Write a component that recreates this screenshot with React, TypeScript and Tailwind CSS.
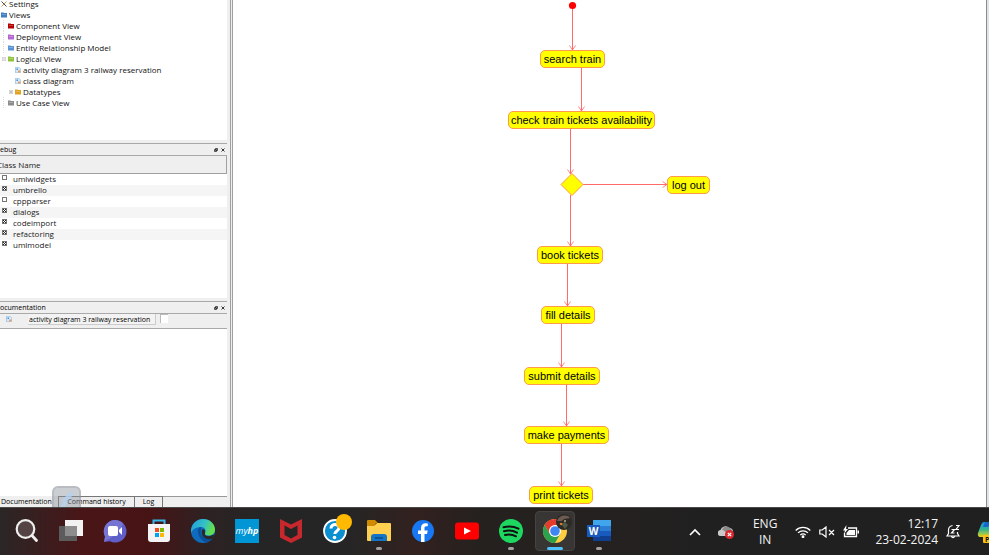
import type { ReactNode } from "react";

type TreeItem = {
  level: 0 | 1 | 2;
  label: string;
  icon: "tools" | "folder" | "diagram";
  color?: string;
  expander?: string;
};

const treeItems: TreeItem[] = [
  { level: 0, label: "Settings", icon: "tools" },
  { level: 0, label: "Views", icon: "folder", color: "#3f7fc4" },
  { level: 1, label: "Component View", icon: "folder", color: "#b30000" },
  { level: 1, label: "Deployment View", icon: "folder", color: "#b566cf" },
  { level: 1, label: "Entity Relationship Model", icon: "folder", color: "#5b93d6" },
  { level: 1, label: "Logical View", icon: "folder", color: "#8fc43c", expander: "−" },
  { level: 2, label: "activity diagram 3 railway reservation", icon: "diagram" },
  { level: 2, label: "class diagram", icon: "diagram" },
  { level: 2, label: "Datatypes", icon: "folder", color: "#e0a020", expander: "+" },
  { level: 1, label: "Use Case View", icon: "folder", color: "#8c8c8c" },
];

const slotWidth = { 0: "w-px", 1: "w-2", 2: "w-[15px]" };

const classes = [
  { name: "umlwidgets", on: false },
  { name: "umbrello", on: true },
  { name: "cppparser", on: false },
  { name: "dialogs", on: true },
  { name: "codeimport", on: true },
  { name: "refactoring", on: true },
  { name: "umlmodel", on: true },
];

const nodes = [
  { label: "search train", box: "left-[307px] top-[50px] w-[65px]" },
  { label: "check train tickets availability", box: "left-[275px] top-[111px] w-[147px]" },
  { label: "log out", box: "left-[434px] top-[176px] w-[43px]" },
  { label: "book tickets", box: "left-[304px] top-[246px] w-[66px]" },
  { label: "fill details", box: "left-[308px] top-[306px] w-[54px]" },
  { label: "submit details", box: "left-[291px] top-[367px] w-[76px]" },
  { label: "make payments", box: "left-[291px] top-[426px] w-[85px]" },
  { label: "print tickets", box: "left-[296px] top-[486px] w-[64px]" },
];

const arrows = [
  { x: 339.5, from: 8, to: 50 },
  { x: 348.5, from: 68, to: 111 },
  { x: 337.5, from: 129, to: 174 },
  { x: 337.5, from: 195, to: 246 },
  { x: 334.5, from: 264, to: 306 },
  { x: 328.5, from: 324, to: 367 },
  { x: 333.5, from: 385, to: 426 },
  { x: 328.5, from: 444, to: 486 },
];

function FolderIcon({ color }: { color?: string }) {
  return (
    <svg viewBox="0 0 12 12" className="size-[6px] shrink-0">
      <path d="M0 1h5l1 1h6v9H0z" fill={color} />
      <path d="M2 5h8" stroke="#fff" strokeOpacity=".25" strokeWidth="2" />
    </svg>
  );
}

function DiagramIcon() {
  return (
    <svg viewBox="0 0 12 12" className="size-[6px] shrink-0">
      <path d="M1 .5h7l3.500 3.500v7.500H1z" fill="#d9ebfa" stroke="#6aa5d8" />
      <path d="M3 3h3v3H3z" fill="#3f8fd6" />
      <path d="M6 7h5v4H6z" fill="#e0a070" />
    </svg>
  );
}

function ToolsIcon() {
  return (
    <svg viewBox="0 0 12 12" className="size-[6px] shrink-0">
      <path d="M1 1l10 10" stroke="#4a4a4a" strokeWidth="2" />
      <path d="M11 1L1 11" stroke="#c9a050" strokeWidth="2" />
    </svg>
  );
}

function PanelTitle({ children }: { children: ReactNode }) {
  return (
    <div className="flex h-[13px] shrink-0 items-center justify-between border-y border-[#a9a9a9] bg-[#efefef] pr-[2px] text-[7px] leading-[11px] text-black">
      <span>{children}</span>
      <span className="flex items-center gap-[3px]">
        <button type="button" aria-label="Float panel" className="size-1">
          <svg viewBox="0 0 8 8" className="size-1">
            <path d="M3 1h4v4H3zM1 3h4v4H1z" fill="none" stroke="#222" strokeWidth="1.500" />
          </svg>
        </button>
        <button type="button" aria-label="Close panel" className="size-1">
          <svg viewBox="0 0 8 8" className="size-1">
            <path d="M1 1l6 6M7 1L1 7" stroke="#222" strokeWidth="1.800" />
          </svg>
        </button>
      </span>
    </div>
  );
}

function Sidebar() {
  return (
    <aside className="relative flex w-[227px] shrink-0 flex-col overflow-hidden bg-[#efefef]">
      <div className="h-[140px] shrink-0 overflow-hidden bg-white">
        <ul className="-mt-[2px]">
          {treeItems.map((item) => (
            <li key={item.label} className="flex h-[11px] items-center whitespace-nowrap text-[8px] leading-[11px] text-[#111]">
              <span className={`${slotWidth[item.level]} flex h-full shrink-0 items-center justify-end`}>
                {item.level === 1 && !item.expander && <span className="mr-1 h-full border-l border-dotted border-[#ddd]" />}
                {item.expander && (
                  <svg viewBox="0 0 8 8" className="mr-[2px] size-1 shrink-0">
                    <path d="M.5.500h7v7h-7zM2 4h4" fill="none" stroke="#999" />
                    {item.expander === "+" && <path d="M4 2v4" stroke="#555" />}
                  </svg>
                )}
              </span>
              {item.icon === "folder" && <FolderIcon color={item.color} />}
              {item.icon === "diagram" && <DiagramIcon />}
              {item.icon === "tools" && <ToolsIcon />}
              <span className="ml-[2px]">{item.label}</span>
            </li>
          ))}
        </ul>
      </div>

      <div className="h-[3px] shrink-0" />
      <PanelTitle>ebug</PanelTitle>
      <div className="h-[142px] shrink-0 bg-white">
        <table className="w-full border-collapse text-[8px] text-[#1a1a1a]">
          <thead>
            <tr>
              <th colSpan={2} className="h-[17px] border-r border-b border-[#a0a0a0] bg-[#efefef] p-0 pt-px text-left leading-4 font-normal">
                <span className="-ml-[3px]">Class Name</span>
              </th>
            </tr>
          </thead>
          <tbody>
            {classes.map((c) => (
              <tr key={c.name} className="even:bg-[#f5f5f5]">
                <td className="w-[13px] p-0 pt-px pl-[2px] align-top">
                  <span className="relative block size-[5px]">
                    <input
                      id={c.name}
                      type="checkbox"
                      defaultChecked={c.on}
                      className="peer block size-[5px] appearance-none border border-[#777] bg-white"
                    />
                    <svg viewBox="0 0 10 10" className="pointer-events-none absolute inset-0 hidden size-[5px] peer-checked:block">
                      <path d="M2 2l6 6M8 2L2 8" stroke="#222" strokeWidth="2" />
                    </svg>
                  </span>
                </td>
                <td className="h-[11px] p-0 leading-[10px]">
                  <label htmlFor={c.name} className="block h-[11px]">{c.name}</label>
                </td>
              </tr>
            ))}
          </tbody>
        </table>
      </div>

      <div className="h-[3px] shrink-0" />
      <PanelTitle>ocumentation</PanelTitle>
      <div className="flex h-[15px] shrink-0 items-start border-b border-[#a9a9a9] pl-[6px]">
        <span className="mt-[2px] flex w-[22px]">
          <DiagramIcon />
        </span>
        <input
          aria-label="Documented item"
          readOnly
          value="activity diagram 3 railway reservation"
          className="h-[11px] w-32 border-r border-b border-[#ccc] bg-[#f3f3f3] pl-px text-[7px] leading-[10px] text-black outline-none"
        />
        <input
          type="checkbox"
          aria-label="Modified"
          className="ml-1 h-[9px] w-2 appearance-none border-t border-l border-[#bbb] bg-white"
        />
      </div>
      <textarea aria-label="Documentation text" className="min-h-0 flex-1 resize-none bg-white outline-none" />
      <div className="flex h-[11px] shrink-0 text-[7px] leading-[11px] text-black">
        <button type="button" className="w-[59px] border-r border-[#777] pl-px text-left">Documentation</button>
        <button type="button" className="w-[76px] border-t border-r border-[#777] leading-[10px]">Command history</button>
        <button type="button" className="w-7 border-t border-r border-[#777] leading-[10px]">Log</button>
        <span className="flex-1 border-t border-[#999]" />
      </div>
      <div className="pointer-events-none absolute bottom-0 left-[52px] h-[21px] w-[29px] rounded-t-md border-2 border-b-0 border-[#8f949c]/30 bg-[#8b929e]/45">
        <svg viewBox="0 0 25 19" className="h-full w-full">
          <path d="M8 12L16 4l4 1-4 6-7 3zM6 19l3-5 5-1-3 6z" fill="#b4d2f2" fillOpacity=".8" />
        </svg>
      </div>
    </aside>
  );
}

function Canvas() {
  return (
    <main className="relative min-w-0 flex-1 overflow-hidden bg-white">
      <svg className="absolute inset-0 h-full w-full" fill="none" stroke="#ff6a6a" strokeWidth="1">
        {arrows.map((a) => (
          <g key={a.from}>
            <path d={`M${a.x} ${a.from}V${a.to}`} />
            <path d={`M${a.x - 3} ${a.to - 4.5}L${a.x} ${a.to}L${a.x + 3} ${a.to - 4.5}`} strokeOpacity=".8" />
          </g>
        ))}
        <path d="M350 184.500H434" />
        <path d="M429.500 181.500L434 184.500L429.500 187.500" strokeOpacity=".8" />
        <circle cx="339.500" cy="5.500" r="3.600" fill="#f00" stroke="none" />
        <path d="M339 173.500L350 184.500L339 195.500L328 184.500Z" fill="#ff0" stroke="#ff9a3c" />
      </svg>
      {nodes.map((n) => (
        <div
          key={n.label}
          className={`absolute flex h-[18px] items-center justify-center rounded-[5px] border border-[#ff9a4a] bg-[#ffff00] font-['Liberation_Sans',Arial,sans-serif] text-[11px] leading-4 whitespace-nowrap text-black ${n.box}`}
        >
          {n.label}
        </div>
      ))}
    </main>
  );
}

const apps: { name: string; state?: "open" | "active"; art: ReactNode }[] = [
  {
    name: "Search",
    art: (
      <>
        <circle cx="10.500" cy="10" r="8.800" fill="#6b5a5c" fillOpacity=".6" stroke="#eee" strokeWidth="2.200" />
        <path d="M17 16.500L21.500 21.500" stroke="#eee" strokeWidth="2.800" strokeLinecap="round" />
      </>
    ),
  },
  {
    name: "Task View",
    art: (
      <>
        <path d="M6 1h18v16H6z" fill="#f2f2f2" />
        <path d="M0 7h18v15H0z" fill="#5c5c5c" />
        <path d="M6 7h12v10H6z" fill="#8d8d8d" />
      </>
    ),
  },
  {
    name: "Chat",
    art: (
      <>
        <path d="M12 1a11.300 11.300 0 1 1-5 21.300L1 23l1-5.500A11.300 11.300 0 0 1 12 1z" fill="#5f5fc9" />
        <path d="M12 1A11.300 11.300 0 0 0 2 17.500L1 23Q16 15 20 4.500A11 11 0 0 0 12 1z" fill="#8583dc" fillOpacity=".6" />
        <rect x="5" y="7" width="10" height="10" rx="2" fill="#fff" />
        <path d="M16 11l3-3v8l-3-3z" fill="#fff" />
      </>
    ),
  },
  {
    name: "Microsoft Store",
    art: (
      <>
        <path d="M6.500 6V1.500h11V6" fill="none" stroke="#35b7ea" strokeWidth="2" />
        <path d="M1 5h22v15q0 3-3 3H4q-3 0-3-3z" fill="#f4f4f4" />
        <path d="M8 9h4v4H8z" fill="#f25022" />
        <path d="M13 9h4v4h-4z" fill="#7fba00" />
        <path d="M8 14h4v4H8z" fill="#00a4ef" />
        <path d="M13 14h4v4h-4z" fill="#ffb900" />
      </>
    ),
  },
  {
    name: "Edge",
    art: (
      <>
        <defs>
          <linearGradient id="edgeTop" x1="0" y1="0" x2="1" y2=".3">
            <stop offset="0" stopColor="#1e9be0" />
            <stop offset=".6" stopColor="#35c1c5" />
            <stop offset="1" stopColor="#63df4f" />
          </linearGradient>
        </defs>
        <circle cx="12" cy="12" r="12" fill="#0f6cbd" />
        <path d="M0 11C1 4 6 0 12 0c7 0 12 5 12 10.500 0 4-3 6-6.500 6-3 0-4-1-3.500-2.500 1.500-3-.5-6-4-6-4.500 0-8.500 2-10 6z" fill="url(#edgeTop)" />
        <path d="M10 8C5 8 6 20 15 23.500c3-.6 5.500-2.500 7-5C15 21 8 17 10 11z" fill="#0b4f9c" />
        <path d="M14 14c-1.500 3 4 4.500 8.500 1.500l1.500 3-3 1.500C14 21 9.500 17 11 11c1-2 4 0 3 3z" fill="#292727" />
      </>
    ),
  },
  {
    name: "myHP",
    art: (
      <>
        <path d="M0 0h24v24H0z" fill="#0096d6" />
        <text x="12" y="15" textAnchor="middle" fill="#fff" fontSize="9" fontStyle="italic" fontFamily="Open Sans">
          my<tspan fontWeight="700">hp</tspan>
        </text>
      </>
    ),
  },
  {
    name: "McAfee",
    art: <path d="M1 0l11 5.500L23 0v18.500L12 24 1 18.500zM5.500 6.500v9.500l6.500 3.500 6.500-3.500V6.500L12 10z" fill="#c6282e" fillRule="evenodd" />,
  },
  {
    name: "HP Support Assistant",
    art: (
      <>
        <circle cx="12" cy="12" r="11" fill="#0a8fd0" stroke="#fff" strokeWidth="1.800" />
        <path d="M8 9.500C8 4 16.500 4.500 16 9c-.3 3-4 3-4.200 6" fill="none" stroke="#fff" strokeWidth="3" />
        <circle cx="11.500" cy="18.500" r="1.800" fill="#fff" />
        <circle cx="21" cy="3" r="8" fill="#ffb900" />
      </>
    ),
  },
  {
    name: "File Explorer",
    state: "open",
    art: (
      <>
        <path d="M0 2q0-1 1-1h7l3 3h-2L7 8H0z" fill="#d18b00" />
        <path d="M0 7h7l3-3h13q1 0 1 1v16q0 1-1 1H1q-1 0-1-1z" fill="#ffd04f" />
        <path d="M4 22v-4q0-3 3-3h10q3 0 3 3v4z" fill="#1275c6" />
        <path d="M8 18h8v2H8z" fill="#0a5395" />
      </>
    ),
  },
  {
    name: "Facebook",
    art: (
      <>
        <circle cx="12" cy="12" r="11" fill="#1877f2" />
        <path d="M10 23v-8H7v-3.500h3V9c0-3.200 2-4.700 4.500-4.700l2.300.2v2.800h-1.500c-1.300 0-1.800.8-1.800 1.700v2.500h3.200L16 15h-2.500v8z" fill="#fff" />
      </>
    ),
  },
  {
    name: "YouTube",
    art: (
      <>
        <rect x="0" y="3.500" width="24" height="17" rx="3" fill="#f00" />
        <path d="M9 8.500l7 3.500-7 3.500z" fill="#fff" />
      </>
    ),
  },
  {
    name: "Spotify",
    state: "open",
    art: (
      <>
        <circle cx="12" cy="12" r="12" fill="#1ed760" />
        <path d="M4.500 8.200q8-2.200 15 1.500M5 12.200q7-2 13 1.500M6 16q6-1.500 11 1.300" fill="none" stroke="#111" strokeWidth="2" strokeLinecap="round" />
      </>
    ),
  },
  {
    name: "Chrome",
    state: "active",
    art: (
      <>
        <circle cx="12" cy="12" r="12" fill="#ffcd40" />
        <path d="M1.600 6A12 12 0 0 1 22.400 6H12l-5.200 9z" fill="#e33b2e" />
        <path d="M1.600 6A12 12 0 0 0 12 24l5.200-9H6.800z" fill="#2ba24c" />
        <circle cx="12" cy="12" r="6" fill="#fff" />
        <circle cx="12" cy="12" r="4.800" fill="#3f86f5" />
        <circle cx="21" cy="3" r="8" fill="#2d2925" />
        <path d="M14 2c2-6 10-7 13-3-3 1-6 0-8 3z" fill="#6b5b50" />
        <path d="M18 5l4-2 3 3-3 4z" fill="#4f5a45" />
        <circle cx="18" cy="5" r="1.300" fill="#d9772e" />
        <circle cx="22" cy="2" r="1" fill="#b9a99a" />
      </>
    ),
  },
  {
    name: "Word",
    state: "open",
    art: (
      <>
        <path d="M6 1h18v6H6z" fill="#41a5ee" />
        <path d="M6 7h18v5H6z" fill="#2b7cd3" />
        <path d="M6 12h18v5H6z" fill="#185abd" />
        <path d="M6 17h18v5H6z" fill="#103f91" />
        <path d="M0 6h13v12H0z" fill="#185abd" />
        <text x="6.500" y="15.500" textAnchor="middle" fill="#fff" fontSize="10" fontWeight="700" fontFamily="Open Sans">W</text>
      </>
    ),
  },
];

function Taskbar() {
  return (
    <footer className="flex h-12 shrink-0 items-start overflow-hidden border-t border-[#4b4848] bg-[linear-gradient(90deg,#2b2626_0px,#4a1517_85px,#471416_150px,#2c2223_210px,#262525_260px,#262525_350px,#32211f_415px,#25211f_480px,#232120_660px,#202020_700px)] pl-[5px] text-[#f5f5f5]">
      <nav className="flex">
        {apps.map((app) => (
          <button key={app.name} type="button" aria-label={app.name} className="flex h-[46px] w-11 items-center justify-center">
            <span
              className={`relative flex size-10 items-center justify-center rounded border ${
                app.state === "active" ? "border-[#454342] bg-[#383635]" : "border-transparent"
              }`}
            >
              <svg viewBox="0 0 24 24" className="size-6 overflow-visible">
                {app.art}
              </svg>
              {app.state && (
                <span
                  className={`absolute bottom-0 h-[3px] rounded-full ${
                    app.state === "active" ? "w-4 bg-[#4cc2ff]" : "w-[6px] bg-[#a0a0a0]"
                  }`}
                />
              )}
            </span>
          </button>
        ))}
      </nav>

      <div className="ml-auto flex h-[47px] shrink-0 items-center">
        <button type="button" aria-label="Show hidden icons" className="mr-[17px]">
          <svg viewBox="0 0 12 8" className="h-2 w-3">
            <path d="M1 7l5-5 5 5" fill="none" stroke="#fff" strokeWidth="1.600" />
          </svg>
        </button>
        <button type="button" aria-label="OneDrive" className="mr-[19px]">
          <svg viewBox="0 0 16 14" className="h-[14px] w-4">
            <path d="M3 11a3 3 0 0 1-.5-6A5 5 0 0 1 11 3a4 4 0 0 1 4 4l-2 4z" fill="#c9c9c9" />
            <path d="M4 4.500A5 5 0 0 1 13 4l2 3-4 2z" fill="#8a8a8a" />
            <circle cx="11.500" cy="9.500" r="4.500" fill="#d9272e" />
            <path d="M9.800 7.800l3.400 3.400M13.200 7.800l-3.400 3.400" stroke="#fff" strokeWidth="1.200" />
          </svg>
        </button>
        <button type="button" className="mr-[18px] text-center text-[12px] leading-4">
          ENG<br />IN
        </button>
        <button type="button" aria-label="Network, sound and battery" className="mr-4 flex items-center gap-2">
          <svg viewBox="0 0 16 12" className="h-3 w-4" fill="none" stroke="#fff" strokeWidth="1.300">
            <path d="M.7 4.500a10.300 10.300 0 0 1 14.600 0M3 6.900a7 7 0 0 1 10 0M5.300 9.100a3.800 3.800 0 0 1 5.400 0" />
            <circle cx="8" cy="10.700" r=".8" fill="#fff" />
          </svg>
          <svg viewBox="0 0 16 12" className="h-3 w-4" fill="none" stroke="#fff" strokeWidth="1.200">
            <path d="M.8 4v4h2.400L7 11V1L3.200 4zM10 4l5 5M15 4l-5 5" />
          </svg>
          <svg viewBox="0 0 16 13" className="h-[13px] w-4">
            <path d="M5 3h8.500v8.500H1.500V8" fill="none" stroke="#fff" strokeWidth="1.300" />
            <path d="M6 5h6v5H3.500V8z" fill="#fff" />
            <path d="M14.500 5.500h1.500v3h-1.500z" fill="#fff" />
            <path d="M3.500 0L0 5.500h2L1 9l4-5H3z" fill="#fff" />
          </svg>
        </button>
        <button type="button" className="text-right text-[12px] leading-4">
          12:17<br />23-02-2024
        </button>
        <button type="button" aria-label="Notifications" className="mr-[17px] ml-2">
          <svg viewBox="0 0 14 16" className="h-4 w-[14px]" fill="none" stroke="#fff" strokeWidth="1.200">
            <path d="M6.500 1.500C4 2 2.500 3.800 2.500 6v3.500L1 12h12l-1.500-2.500V8M5.500 12.500a1.600 1.600 0 0 0 3 0" />
            <path d="M5.500 5.500h3l-3 3.500h3M10 1.500h3L10 5.500h3" />
          </svg>
        </button>
        <button type="button" aria-label="Copilot preview" className="w-3 shrink-0 overflow-hidden">
          <svg viewBox="0 0 24 24" className="size-6">
            <defs>
              <linearGradient id="copilot" x1="0" y1="0" x2="0" y2="1">
                <stop offset="0" stopColor="#1d8fe8" />
                <stop offset=".5" stopColor="#35b58c" />
                <stop offset="1" stopColor="#e8d21f" />
              </linearGradient>
            </defs>
            <path d="M7 2h14v15H4q-4 0-3-4l3-8q1-3 3-3z" fill="url(#copilot)" />
            <path d="M8 2h6l-3 5H6z" fill="#1466c9" />
            <rect x="6" y="15" width="18" height="8" rx="1" fill="#ffc20e" />
            <text x="8" y="22" fill="#111" fontSize="7" fontWeight="700" fontFamily="Open Sans">P</text>
          </svg>
        </button>
      </div>
    </footer>
  );
}

export default function App() {
  return (
    <div className="flex h-screen flex-col overflow-hidden bg-white font-['Open_Sans','Noto_Sans',sans-serif]">
      <div className="flex min-h-0 flex-1">
        <Sidebar />
        <div className="flex w-[6px] shrink-0 justify-end gap-px bg-[#efefef]">
          <span className="w-px bg-[#a0a0a0]" />
          <span className="w-px bg-[#a0a0a0]" />
        </div>
        <Canvas />
        <div className="w-[3px] shrink-0 border-l border-[#8c8c8c] bg-[#dfe3ea]" />
      </div>
      <Taskbar />
    </div>
  );
}
